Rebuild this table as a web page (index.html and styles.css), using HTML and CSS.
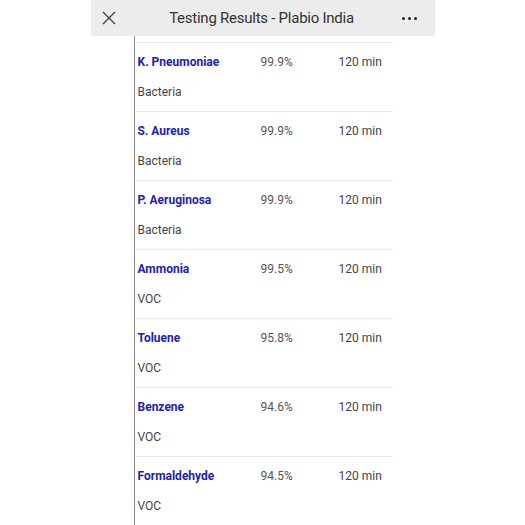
FILE: index.html
```html
<!DOCTYPE html>
<html lang="en">
<head>
    <meta charset="UTF-8">
    <meta name="viewport" content="width=device-width, initial-scale=1.0">
    <title>Testing Results - Plabio India</title>
    <link rel="stylesheet" href="styles.css">
</head>
<body>
    <div class="phone">
        <div class="topbar">
            <svg class="close" width="14" height="14" viewBox="0 0 14 14">
                <path d="M1 1 L13 13 M13 1 L1 13" stroke="#444" stroke-width="1.4" fill="none"/>
            </svg>
            <div class="title">Testing Results - Plabio India</div>
            <div class="dots"><span></span><span></span><span></span></div>
        </div>

        <div class="content">
            <div class="results">
                <div class="row">
                    <div class="line"><span class="name">K. Pneumoniae</span><span class="pct">99.9%</span><span class="time">120 min</span></div>
                    <div class="type">Bacteria</div>
                </div>
                <div class="row">
                    <div class="line"><span class="name">S. Aureus</span><span class="pct">99.9%</span><span class="time">120 min</span></div>
                    <div class="type">Bacteria</div>
                </div>
                <div class="row">
                    <div class="line"><span class="name">P. Aeruginosa</span><span class="pct">99.9%</span><span class="time">120 min</span></div>
                    <div class="type">Bacteria</div>
                </div>
                <div class="row">
                    <div class="line"><span class="name">Ammonia</span><span class="pct">99.5%</span><span class="time">120 min</span></div>
                    <div class="type">VOC</div>
                </div>
                <div class="row">
                    <div class="line"><span class="name">Toluene</span><span class="pct">95.8%</span><span class="time">120 min</span></div>
                    <div class="type">VOC</div>
                </div>
                <div class="row">
                    <div class="line"><span class="name">Benzene</span><span class="pct">94.6%</span><span class="time">120 min</span></div>
                    <div class="type">VOC</div>
                </div>
                <div class="row">
                    <div class="line"><span class="name">Formaldehyde</span><span class="pct">94.5%</span><span class="time">120 min</span></div>
                    <div class="type">VOC</div>
                </div>
            </div>
        </div>
    </div>
</body>
</html>
```

FILE: styles.css
```css
body {
    margin: 0;
    background: #fff;
    font-family: Roboto, "Noto Sans", Arial, sans-serif;
    overflow: hidden;
}

.phone {
    width: 344px;
    height: 525px;
    margin: 0 auto;
}

.topbar {
    height: 36px;
    background: #ececec;
    display: flex;
    align-items: center;
    padding: 0 18px 0 10px;
}

.close {
    margin-left: 1px;
}

.title {
    flex: 1;
    text-align: center;
    font-size: 15px;
    letter-spacing: -0.25px;
    color: #333;
    padding-left: 6px;
    padding-bottom: 1px;
}

.dots {
    display: flex;
    gap: 3px;
}

.dots span {
    width: 3px;
    height: 3px;
    background: #222;
    border-radius: 50%;
}

.content {
    padding-left: 43px;
}

.results {
    width: 258px;
    border-left: 1px solid #888;
    padding-top: 6px;
    height: 483px;
}

.row {
    border-top: 1px solid #ebebeb;
    height: 68px;
    padding-left: 3px;
}

.line {
    display: flex;
    align-items: center;
    height: 38px;
    font-size: 12px;
}

.name {
    width: 123px;
    color: #2222aa;
    font-weight: bold;
}

.pct {
    width: 78px;
    color: #555;
}

.time {
    color: #444;
}

.type {
    font-size: 12px;
    color: #444;
    line-height: 22px;
}
```
